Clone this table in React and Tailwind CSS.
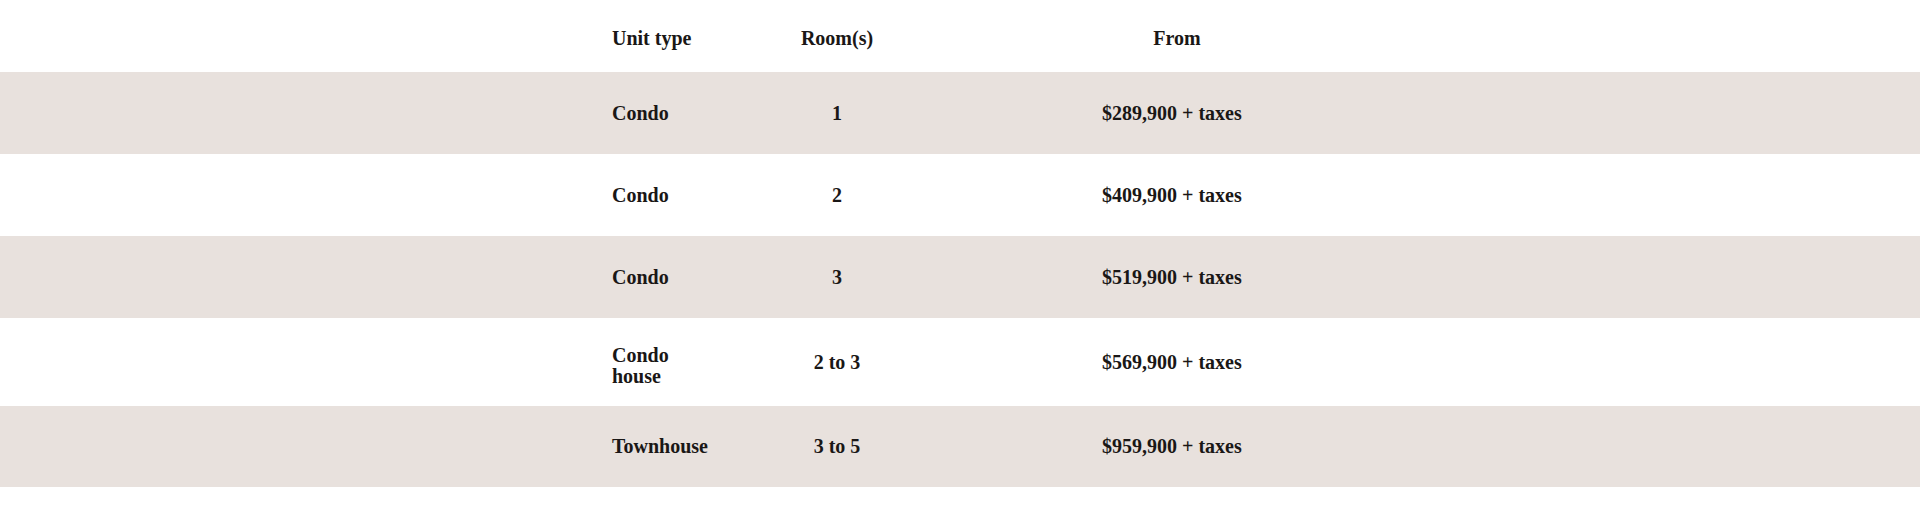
const rows = [
  { type: "Condo", rooms: "1", price: "$289,900 + taxes", shaded: true },
  { type: "Condo", rooms: "2", price: "$409,900 + taxes", shaded: false },
  { type: "Condo", rooms: "3", price: "$519,900 + taxes", shaded: true },
  { type: "Condo house", rooms: "2 to 3", price: "$569,900 + taxes", shaded: false, tall: true },
  { type: "Townhouse", rooms: "3 to 5", price: "$959,900 + taxes", shaded: true },
];

export default function App() {
  return (
    <div
      className="w-full min-h-[511px] bg-white text-[#1a1716] text-[20px] leading-[21px] font-bold"
      style={{ fontFamily: '"Liberation Serif", "Times New Roman", serif' }}
    >
      {/* header */}
      <div className="w-full h-[72px] pt-[5px] flex items-center">
        <div className="w-[696px] mx-auto flex items-center">
          <div className="w-[188px]">Unit type</div>
          <div className="w-[74px] text-center">Room(s)</div>
          <div className="w-[228px]" />
          <div className="w-[150px] text-center">From</div>
        </div>
      </div>

      {rows.map((row, i) => (
        <div
          key={i}
          className={
            "w-full flex items-center " +
            (row.shaded ? "bg-[#e8e1dd] " : "bg-white ") +
            (row.tall ? "h-[88px]" : i === 4 ? "h-[81px]" : "h-[82px]")
          }
        >
          <div className="w-[696px] mx-auto flex items-center">
            <div className="w-[188px]">
              <div className={row.tall ? "w-[105px] mt-[8px]" : "w-[105px]"}>{row.type}</div>
            </div>
            <div className="w-[74px] text-center">{row.rooms}</div>
            <div className="w-[228px]" />
            <div className="w-[180px] whitespace-nowrap">{row.price}</div>
          </div>
        </div>
      ))}
    </div>
  );
}
